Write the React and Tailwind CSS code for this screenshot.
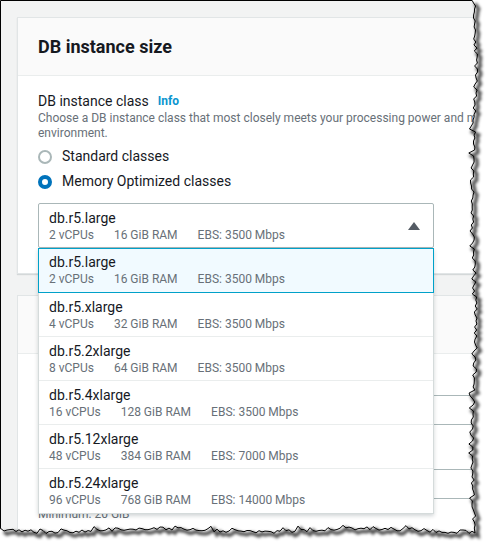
import React from "react";

const options = [
  { name: "db.r5.large", cpu: "2 vCPUs", ram: "16 GiB RAM", ebs: "EBS: 3500 Mbps" },
  { name: "db.r5.xlarge", cpu: "4 vCPUs", ram: "32 GiB RAM", ebs: "EBS: 3500 Mbps" },
  { name: "db.r5.2xlarge", cpu: "8 vCPUs", ram: "64 GiB RAM", ebs: "EBS: 3500 Mbps" },
  { name: "db.r5.4xlarge", cpu: "16 vCPUs", ram: "128 GiB RAM", ebs: "EBS: 3500 Mbps" },
  { name: "db.r5.12xlarge", cpu: "48 vCPUs", ram: "384 GiB RAM", ebs: "EBS: 7000 Mbps" },
  { name: "db.r5.24xlarge", cpu: "96 vCPUs", ram: "768 GiB RAM", ebs: "EBS: 14000 Mbps" },
];

const Specs = ({ o }) => (
  <div className="flex gap-[20px] text-[12px] leading-[16px] text-[#687078]">
    <span>{o.cpu}</span>
    <span>{o.ram}</span>
    <span>{o.ebs}</span>
  </div>
);

const Radio = ({ checked, label }) => (
  <label className="flex items-center h-[25px] gap-[10px]">
    {checked ? (
      <span className="w-[14px] h-[14px] rounded-full border-[4px] border-[#0073bb] bg-white" />
    ) : (
      <span className="w-[14px] h-[14px] rounded-full border-2 border-[#aab7b8] bg-white" />
    )}
    <span className="text-[14px] text-[#16191f]">{label}</span>
  </label>
);

// seeded random so the torn edge is the same on every run
function makeRng(seed) {
  let s = seed;
  return () => {
    s = (s * 16807) % 2147483647;
    return (s - 1) / 2147483646;
  };
}

const TornEdge = () => {
  const r = makeRng(11);
  const right = [];
  for (let y = 0; y <= 528; y += 3) {
    let x = 474 + Math.sin(y / 41) * 1.8 + (r() - 0.5) * 3.6;
    if (r() > 0.88) x -= 3;
    right.push([x, y === 0 ? 0.5 : y]);
  }
  const bottom = [];
  for (let x = 475; x >= 0; x -= 3) {
    let y = 530 + Math.sin(x / 33) * 1.8 + (r() - 0.5) * 3.6;
    if (r() > 0.88) y -= 3;
    bottom.push([x < 1 ? 0.5 : x, y]);
  }
  const torn = [...right, ...bottom];
  const tornD = "M" + torn.map(([x, y]) => `${x.toFixed(1)} ${y.toFixed(1)}`).join(" L");
  const paper = `M0.5 0.5 L${tornD.slice(1)} L0.5 ${bottom[bottom.length - 1][1].toFixed(1)} Z`;

  return (
    <svg className="absolute inset-0 pointer-events-none" width="488" height="545" viewBox="0 0 488 545">
      <defs>
        <filter id="sh" x="-10%" y="-10%" width="120%" height="120%">
          <feGaussianBlur stdDeviation="1.4" />
        </filter>
      </defs>
      <path d={`M0 0H488V545H0Z ${paper}`} fill="#fff" fillRule="evenodd" />
      <path
        d={tornD}
        fill="none"
        stroke="rgba(0,0,0,0.7)"
        strokeWidth="3.5"
        transform="translate(3 3)"
        filter="url(#sh)"
      />
      <path d={paper} fill="none" stroke="#000" strokeWidth="1" />
    </svg>
  );
};

export default function App() {
  return (
    <div className="relative w-[488px] h-[545px] overflow-hidden bg-white font-['Roboto',sans-serif]">
      <div className="w-full h-full bg-[#f2f3f3] pt-[17px] pl-[17px]">
        {/* card: DB instance size */}
        <div className="w-[520px] bg-white border border-[#e1e5e6] shadow-[0_1px_1px_rgba(0,28,36,0.12)]">
          <div className="h-[58px] bg-[#fafafa] border-b border-[#eaeded] px-[20px] flex items-center">
            <h2 className="text-[18px] font-bold text-[#16191f]">DB instance size</h2>
          </div>
          <div className="px-[20px] pt-[15px] pb-[25px]">
            <div className="flex items-center gap-[9px] h-[20px]">
              <span className="text-[14px] text-[#16191f]">DB instance class</span>
              <span className="text-[12px] font-bold text-[#0a95cf]">Info</span>
            </div>
            <p className="text-[12px] leading-[15px] text-[#687078] whitespace-nowrap">
              Choose a DB instance class that most closely meets your processing power and memory requirements for your
              <br />
              environment.
            </p>
            <div className="mt-[3px] flex flex-col">
              <Radio label="Standard classes" />
              <Radio checked label="Memory Optimized classes" />
            </div>

            <div className="relative w-[396px] mt-[9px]">
              <div className="h-[45px] border border-[#aab7b8] rounded-[2px] pl-[10px] pt-[5px] flex justify-between">
                <div>
                  <div className="text-[14px] leading-[18px] text-[#16191f]">db.r5.large</div>
                  <Specs o={options[0]} />
                </div>
                <div className="flex items-center pr-[13px] pb-[4px]">
                  <svg width="12" height="8" viewBox="0 0 12 8">
                    <path d="M6 0 L12 8 L0 8 Z" fill="#545b64" />
                  </svg>
                </div>
              </div>

              {/* open dropdown list */}
              <div className="absolute left-0 top-full w-full z-10 bg-white border-x border-b border-[#d5dbdb] shadow-[0_2px_4px_rgba(0,28,36,0.18)]">
                {options.map((o, i) =>
                  i === 0 ? (
                    <div key={o.name} className="-mx-px h-[45px] border border-[#00a1c9] bg-[#f1faff] pl-[10px] pt-[4px]">
                      <div className="text-[14px] leading-[18px] text-[#16191f]">{o.name}</div>
                      <Specs o={o} />
                    </div>
                  ) : (
                    <div
                      key={o.name}
                      className={`h-[44px] pl-[10px] pt-[5px] ${i < options.length - 1 ? "border-b border-[#eaeded]" : ""}`}
                    >
                      <div className="text-[14px] leading-[18px] text-[#16191f]">{o.name}</div>
                      <Specs o={o} />
                    </div>
                  )
                )}
              </div>
            </div>
          </div>
        </div>

        {/* card below, mostly hidden by the list */}
        <div className="mt-[21px] w-[520px] h-[300px] bg-white border border-[#e1e5e6]">
          <div className="h-[58px] bg-[#fafafa] border-b border-[#eaeded]" />
          <div className="px-[20px] pt-[41px]">
            <div className="w-[460px] h-[30px] border border-[#aab7b8] rounded-[2px]" />
            <div className="w-[460px] h-[30px] mt-[44px] border border-[#aab7b8] rounded-[2px]" />
            <div className="mt-[8px] text-[12px] leading-[15px] text-[#687078]">Minimum: 20 GiB</div>
          </div>
        </div>
      </div>
      <TornEdge />
    </div>
  );
}
